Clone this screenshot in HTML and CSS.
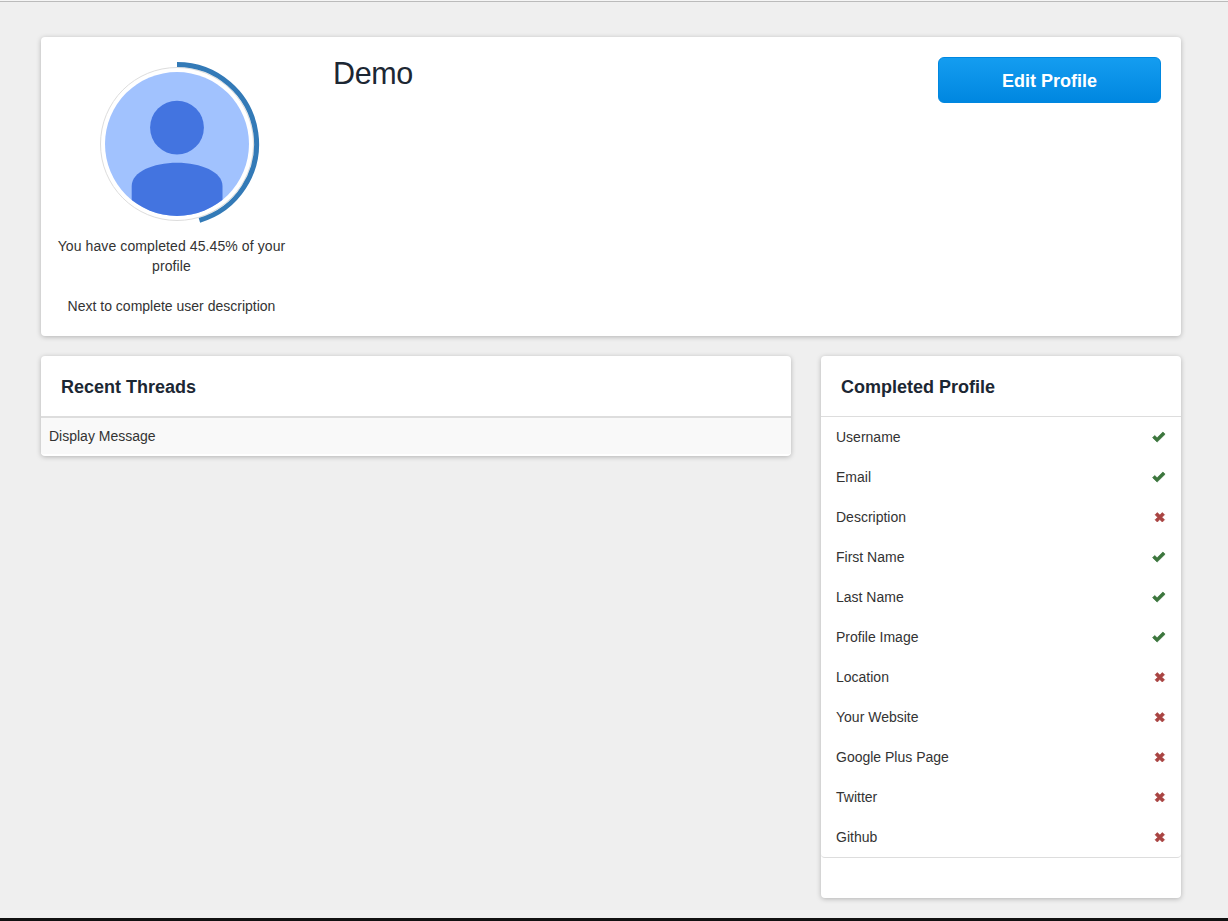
FILE: index.html
```
<!DOCTYPE html>
<html lang="en">
<head>
    <meta charset="UTF-8">
    <meta name="viewport" content="width=device-width, initial-scale=1.0">
    <title>Demo - Profile</title>
    <link rel="stylesheet" href="styles.css">
</head>
<body>

<!-- Icon shapes -->
<svg class="icon-defs" aria-hidden="true">
    <symbol id="check" viewBox="0 0 14 14">
        <path d="M0.6 7.7 L2.7 5.5 L5.1 7.8 L10.9 2 L13.1 4.2 L5.1 12.1 Z" stroke-width="0.7" stroke-linejoin="round"/>
    </symbol>
    <symbol id="cross" viewBox="0 0 14 14">
        <path d="M3.1 4.8 L5.3 2.6 L7.8 5.1 L10.3 2.6 L12.5 4.8 L10 7.3 L12.5 9.8 L10.3 12 L7.8 9.5 L5.3 12 L3.1 9.8 L5.6 7.3 Z" stroke-width="0.7" stroke-linejoin="round"/>
    </symbol>
</svg>

<div class="container">
    <!-- Profile Header -->
    <div class="card profile">
        <div class="profile-left">
            <svg class="avatar" width="166" height="166" viewBox="-83 -83 166 166">
                <defs>
                    <clipPath id="round"><circle r="72"/></clipPath>
                </defs>
                <circle r="76.5" fill="#fff" stroke="#ddd" stroke-width="1"/>
                <g clip-path="url(#round)">
                    <rect x="-72" y="-72" width="144" height="144" fill="#a1c2fe"/>
                    <circle cy="-16.4" r="26.9" fill="#4374e0"/>
                    <path d="M-45.3 72 V42 C-45.3 28 -24 18.8 0 18.8 S45.5 28 45.5 42 V72 Z" fill="#4374e0"/>
                </g>
                <path d="M0 -79.5 A79.5 79.5 0 0 1 22.4 76.3" fill="none" stroke="#337ab7" stroke-width="5"/>
            </svg>
            <p class="progress">You have completed 45.45% of your profile</p>
            <p>Next to complete user description</p>
        </div>
        <h1>Demo</h1>
        <button type="button" class="btn">Edit Profile</button>
    </div>

    <div class="row">
        <!-- Recent Threads -->
        <div class="card threads">
            <h2>Recent Threads</h2>
            <div class="message">Display Message</div>
        </div>

        <!-- Completed Profile -->
        <div class="card completed">
            <h2>Completed Profile</h2>
            <ul>
                <li>Username <svg class="icon yes"><use href="#check"/></svg></li>
                <li>Email <svg class="icon yes"><use href="#check"/></svg></li>
                <li>Description <svg class="icon no"><use href="#cross"/></svg></li>
                <li>First Name <svg class="icon yes"><use href="#check"/></svg></li>
                <li>Last Name <svg class="icon yes"><use href="#check"/></svg></li>
                <li>Profile Image <svg class="icon yes"><use href="#check"/></svg></li>
                <li>Location <svg class="icon no"><use href="#cross"/></svg></li>
                <li>Your Website <svg class="icon no"><use href="#cross"/></svg></li>
                <li>Google Plus Page <svg class="icon no"><use href="#cross"/></svg></li>
                <li>Twitter <svg class="icon no"><use href="#cross"/></svg></li>
                <li>Github <svg class="icon no"><use href="#cross"/></svg></li>
            </ul>
        </div>
    </div>
</div>

<div class="footer"></div>

</body>
</html>
```
FILE: styles.css
```
* {
    margin: 0;
    padding: 0;
    box-sizing: border-box;
}
body {
    display: flex;
    flex-direction: column;
    height: 921px;
    font-family: "Liberation Sans", Arial, sans-serif;
    font-size: 14px;
    line-height: 20px;
    background-color: #efefef;
    color: #333;
    overflow: hidden;
}
body::before {
    content: "";
    height: 1px;
    flex-shrink: 0;
    background-color: #f5f5f5;
    border-bottom: 1px solid #bbb;
}
.icon-defs {
    display: none;
}
.container {
    width: 1140px;
    margin: 35px 0 0 41px;
    flex: 1;
}
.card {
    background-color: #fff;
    border-radius: 4px;
    box-shadow: 0 1px 5px rgba(0, 0, 0, 0.25);
}
.profile {
    display: flex;
    align-items: flex-start;
    height: 299px;
    padding: 20px 20px 0 0;
    margin-bottom: 20px;
}
.profile-left {
    width: 261px;
    text-align: center;
}
.profile-left p {
    margin-bottom: 20px;
}
.profile-left .progress {
    letter-spacing: 0.1px;
}
.avatar {
    display: block;
    margin: 4px 0 9px 53px;
}
h1 {
    flex: 1;
    margin-left: 31px;
    font-size: 30.5px;
    font-weight: 400;
    line-height: 32px;
    letter-spacing: -0.4px;
    color: #1c2733;
}
.btn {
    width: 223px;
    height: 46px;
    padding-top: 2px;
    font-family: inherit;
    font-size: 18px;
    font-weight: bold;
    color: #fff;
    background: linear-gradient(#149df0, #0087e0);
    border: 1px solid #0087e0;
    border-radius: 6px;
    cursor: pointer;
}
.row {
    display: flex;
    align-items: flex-start;
    justify-content: space-between;
}
h2 {
    padding: 21px 20px 19px;
    font-size: 18px;
    color: #1c2733;
}
.threads {
    width: 750px;
    padding-bottom: 2px;
}
.message {
    height: 38px;
    padding: 8px;
    background-color: #f9f9f9;
    border-top: 2px solid #ddd;
}
.completed {
    width: 360px;
    height: 542px;
}
ul {
    list-style: none;
    border-top: 1px solid #ddd;
    border-bottom: 1px solid #ddd;
    border-radius: 0 0 4px 4px;
}
li {
    display: flex;
    align-items: center;
    justify-content: space-between;
    height: 40px;
    padding: 0 15px;
}
.icon {
    width: 14px;
    height: 14px;
}
.yes {
    fill: #3c763d;
    stroke: #3c763d;
}
.no {
    fill: #a94442;
    stroke: #a94442;
}
.footer {
    height: 3px;
    background-color: #111;
}
```
